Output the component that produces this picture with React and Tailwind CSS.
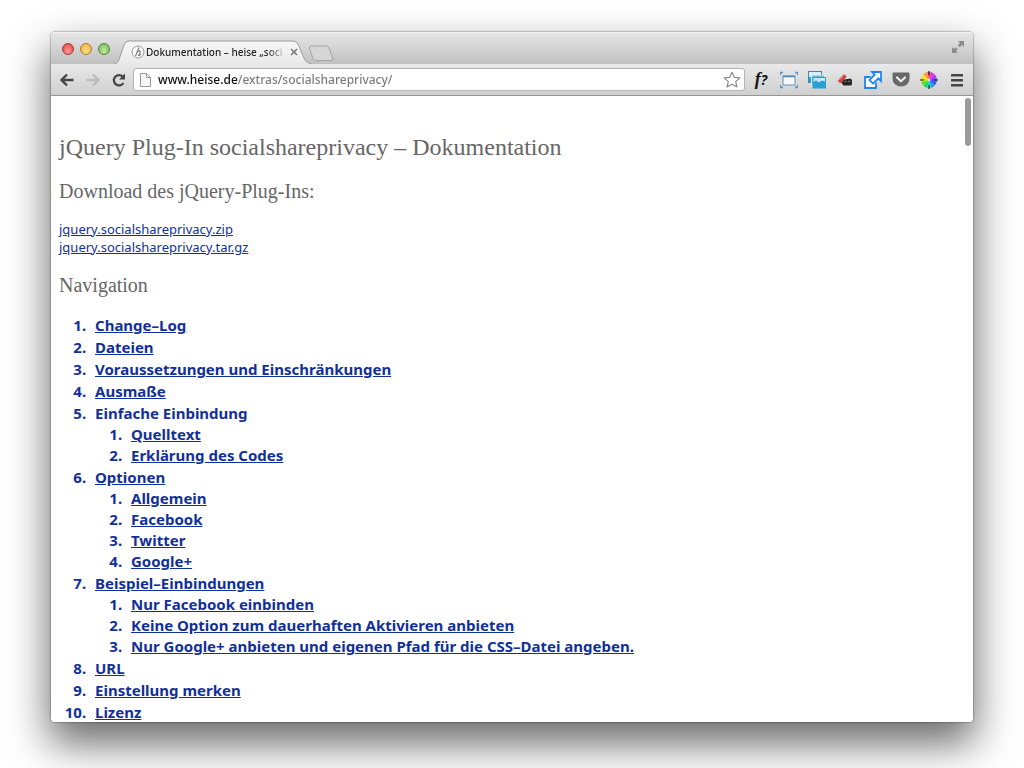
import React, { useState } from 'react';

const downloads = ['jquery.socialshareprivacy.zip', 'jquery.socialshareprivacy.tar.gz'];

const navigation = [
  { title: 'Change–Log', href: '#changelog' },
  { title: 'Dateien', href: '#dateien' },
  { title: 'Voraussetzungen und Einschränkungen', href: '#voraussetzungen' },
  { title: 'Ausmaße', href: '#ausmasse' },
  {
    title: 'Einfache Einbindung',
    children: [
      { title: 'Quelltext', href: '#quelltext' },
      { title: 'Erklärung des Codes', href: '#erklaerung' }
    ]
  },
  {
    title: 'Optionen',
    href: '#optionen',
    children: [
      { title: 'Allgemein', href: '#allgemein' },
      { title: 'Facebook', href: '#facebook' },
      { title: 'Twitter', href: '#twitter' },
      { title: 'Google+', href: '#google' }
    ]
  },
  {
    title: 'Beispiel–Einbindungen',
    href: '#beispiele',
    children: [
      { title: 'Nur Facebook einbinden', href: '#nur-facebook' },
      { title: 'Keine Option zum dauerhaften Aktivieren anbieten', href: '#keine-option' },
      { title: 'Nur Google+ anbieten und eigenen Pfad für die CSS–Datei angeben.', href: '#nur-google' }
    ]
  },
  { title: 'URL', href: '#url' },
  { title: 'Einstellung merken', href: '#einstellung' },
  { title: 'Lizenz', href: '#lizenz' }
];

const FontIcon = () => (
  <span className="font-['Liberation_Serif',serif] text-lg leading-[18px] font-bold italic text-[#151515]">
    f<span className="font-['Noto_Sans',sans-serif] text-sm">?</span>
  </span>
);

const ResizeIcon = () => (
  <svg viewBox="0 0 18 18" className="size-[18px]" fill="none">
    <rect x="3" y="5" width="12" height="9" fill="#f6f8fa" stroke="#5c93c0" />
    <path d="M3 5.5h12" stroke="#4b86b8" strokeWidth="1.6" />
    <path d="M0.5 4V1.5H3M15 1.5h2.5V4M0.5 14v2.5H3M15 16.5h2.5V14" stroke="#5c93c0" strokeWidth="1.3" />
  </svg>
);

const PicturesIcon = () => (
  <svg viewBox="0 0 18 18" className="size-[18px]">
    <rect x="0.5" y="0.5" width="13" height="11" fill="#d9eef8" stroke="#2c8dba" />
    <rect x="1" y="6" width="12" height="5" fill="#3aa0cc" />
    <rect x="3.5" y="4" width="13" height="10" fill="#6cc0e4" stroke="#e9f6fc" strokeWidth="0.8" />
    <rect x="4.5" y="6" width="13.5" height="11.5" fill="#2b9fd4" />
    <path d="M5.5 7h11.500v3.500l-3-1-3 2-3-2-2.500 1.500z" fill="#bfe6f6" />
    <circle cx="14.500" cy="8.500" r="0.900" fill="#fff" />
  </svg>
);

const EraserIcon = () => (
  <svg viewBox="0 0 18 18" className="size-[18px]">
    <path d="M2 9.5 7.5 3.5Q9 3 10.5 5.5L5.5 12Q2.500 12 2 9.500Z" fill="#c8403a" />
    <path d="M3 9 8 4.200" stroke="#e4776d" strokeWidth="1.2" />
    <path d="M5.5 12 8 8.5 14.5 7.5 16 9v4.500l-1 1H7.500Z" fill="#262626" />
    <path d="M8.5 10.5h2M12 10.200h2.500" stroke="#777" />
  </svg>
);

const ShareIcon = () => (
  <svg viewBox="0 0 18 18" className="size-[18px]" fill="#fff" stroke="#1e86f0" strokeWidth="1.8">
    <path d="M6.5 6H1v11h11v-5.500" />
    <path d="M8 1h9v9l-2.700-2.700-5.300 5.300L5.400 9l5.300-5.300z" />
  </svg>
);

const PocketIcon = () => (
  <svg viewBox="0 0 18 18" className="size-[18px]">
    <path d="M1.500 1.500h15q1 0 1 1v5a8.500 8 0 0 1-17 0v-5q0-1 1-1z" fill="#686868" />
    <path d="m5 6.500 4 3.800 4-3.800" fill="none" stroke="#eee" strokeWidth="2.2" strokeLinecap="round" strokeLinejoin="round" />
  </svg>
);

// clockwise from the top
const wheelColors = ['#f5455e', '#f02ad8', '#a63cf0', '#5548f2', '#2b55f5', '#169cf0', '#18d8c4', '#1ad95a', '#4fe51c', '#b5ec1b', '#ffe11a', '#ff9a30'];

const ColorWheelIcon = () => (
  <svg viewBox="0 0 18 18" className="size-[18px]">
    {wheelColors.map((color, idx) => (
      <path key={color} d="M9 9 7 1.300A8 8 0 0 1 11 1.300Z" fill={color} transform={`rotate(${idx * 30} 9 9)`} />
    ))}
    <path d="M9 0v4M9 14v4M0 9h4M14 9h4" stroke="#222" strokeWidth="1.2" />
    <circle cx="9" cy="9" r="1" fill="#fff" />
  </svg>
);

const MenuIcon = () => (
  <svg viewBox="0 0 18 18" className="size-[18px]" fill="#454545">
    <rect x="3" y="3" width="12" height="2.5" rx="0.5" />
    <rect x="3" y="8" width="12" height="2.5" rx="0.5" />
    <rect x="3" y="13" width="12" height="2.5" rx="0.5" />
  </svg>
);

const extensions = [
  { label: 'Schriftart', Icon: FontIcon },
  { label: 'Fenstergröße', Icon: ResizeIcon },
  { label: 'Bilder', Icon: PicturesIcon },
  { label: 'Cache leeren', Icon: EraserIcon },
  { label: 'Teilen', Icon: ShareIcon },
  { label: 'Pocket', Icon: PocketIcon },
  { label: 'Farben', Icon: ColorWheelIcon },
  { label: 'Menü', Icon: MenuIcon }
];

const TitleBar = () => (
  <div className="flex h-8 items-end border-t border-[#f4f4f4] bg-linear-to-b from-[#e6e6e6] to-[#c0c0c0] pl-[11px]">
    <div className="flex gap-[6px] pb-[9px]">
      <button aria-label="Schließen" className="size-3 rounded-full border border-[#a63a38] bg-radial-[at_50%_75%] from-[#ff9a94] to-[#dc3f3d]" />
      <button aria-label="Minimieren" className="size-3 rounded-full border border-[#b27a2a] bg-radial-[at_50%_75%] from-[#ffe28c] to-[#eba536]" />
      <button aria-label="Vergrößern" className="size-3 rounded-full border border-[#518440] bg-radial-[at_50%_75%] from-[#c5ec9c] to-[#70b354]" />
    </div>
    <div className="relative ml-1 flex h-6 w-[198px] items-center pr-2 pl-[17px]">
      <svg viewBox="0 0 198 24" className="absolute inset-0 h-6 w-[198px]">
        <defs>
          <linearGradient id="tab" x1="0" y1="0" x2="0" y2="1">
            <stop offset="0" stopColor="#f7f7f7" />
            <stop offset="1" stopColor="#e9e9e9" />
          </linearGradient>
        </defs>
        <path
          d="M0 24C4 23 4.500 21 5.500 18L10 5Q11.500 1 15 1H179Q183 1 184.500 5L190 18C191.500 21.500 193 23 198 24"
          fill="url(#tab)"
          stroke="#9b9b9b"
        />
      </svg>
      <svg viewBox="0 0 14 14" className="relative size-[14px] shrink-0" fill="none" stroke="#999">
        <circle cx="7" cy="7" r="6" fill="#fafafa" />
        <path d="M8 2.500 4.500 11M5.500 8Q8 5 9 6T7.500 10.500Q8.500 11 10 9" stroke="#777" strokeWidth="1.1" />
      </svg>
      <span className="relative ml-px flex-1 mask-r-from-85% font-['Noto_Sans',sans-serif] text-[10px] leading-4 font-medium whitespace-nowrap text-[#222]">
        Dokumentation – heise „soci
      </span>
      <button aria-label="Tab schließen" className="relative mr-1 ml-px flex size-3 items-center justify-center">
        <svg viewBox="0 0 12 12" className="size-3" stroke="#777" strokeWidth="1.5">
          <path d="m3 3 6 6M9 3 3 9" />
        </svg>
      </button>
    </div>
    <button aria-label="Neuer Tab" className="-ml-1 mb-[2px]">
      <svg viewBox="0 0 26 17" className="h-[17px] w-[26px]">
        <path d="M3 1H18Q20 1 21 3L24.500 13Q25 15.500 23 15.500H8Q6 15.500 5 13.500L1.500 3.500Q1 1 3 1Z" fill="#d6d6d6" stroke="#a5a5a5" />
      </svg>
    </button>
    <button aria-label="Vollbild" className="mr-2 mb-[10px] ml-auto">
      <svg viewBox="0 0 14 14" className="size-[14px]" fill="#8c8c8c">
        <path d="M7 1h6v6l-2-2-2.200 2.200-2-2L9 3zM1 7l2 2 1.800-1.800 2 2L5 11l2 2H1z" />
      </svg>
    </button>
  </div>
);

const Toolbar = () => {
  const [url, setUrl] = useState('www.heise.de/extras/socialshareprivacy/');

  return (
    <div className="flex h-8 items-center border-b border-[#959595] bg-linear-to-b from-[#e9e9e9] to-[#cfcfcf] pr-[7px] pl-[3px]">
      <button aria-label="Zurück" className="flex w-[26px] justify-center">
        <svg viewBox="0 0 16 16" className="size-4" fill="none" stroke="#454545" strokeWidth="2.4">
          <path d="M14.500 8H3M8 2.500 2.500 8 8 13.500" />
        </svg>
      </button>
      <button aria-label="Vorwärts" className="flex w-[26px] justify-center">
        <svg viewBox="0 0 16 16" className="size-4" fill="none" stroke="#bdbdbd" strokeWidth="2.4">
          <path d="M1.500 8H13M8 2.500 13.500 8 8 13.500" />
        </svg>
      </button>
      <button aria-label="Neu laden" className="flex w-[26px] justify-center">
        <svg viewBox="0 0 16 16" className="size-4">
          <path d="M12.500 11A5.200 5.200 0 1 1 11.500 4.300" fill="none" stroke="#454545" strokeWidth="2.2" />
          <path d="M14 1.500V7.500H8Z" fill="#454545" />
        </svg>
      </button>
      <div className="mr-[7px] ml-px flex h-[23px] flex-1 items-center rounded-[3px] border border-[#b4b4b4] bg-white pr-[3px] pl-1">
        <svg viewBox="0 0 14 16" className="h-4 w-[14px]" fill="#f7f7f7" stroke="#999">
          <path d="M2.500 1.500H8.500L12.500 5.500V14.500H2.500ZM8.500 1.500V5.500H12.500" />
        </svg>
        <input
          type="text"
          aria-label="Adresse"
          value={url}
          onChange={(e) => setUrl(e.target.value)}
          className="ml-[6px] min-w-0 flex-1 bg-linear-to-r from-[#111] from-[80px] to-[#777] to-[80px] bg-clip-text font-['Noto_Sans',sans-serif] text-xs leading-5 font-medium text-transparent outline-none"
        />
        <button aria-label="Lesezeichen">
          <svg viewBox="0 0 18 18" className="size-[18px]" fill="#fff" stroke="#8c8c8c" strokeWidth="1.2" strokeLinejoin="round">
            <path d="m9 1.300 2.300 5 5.500.600-4.100 3.700 1.200 5.400L9 13.200 4.100 16l1.200-5.400L1.200 6.900l5.500-.600z" />
          </svg>
        </button>
      </div>
      <div className="flex items-center gap-[10px]">
        {extensions.map(({ label, Icon }) => (
          <button key={label} aria-label={label} className="flex size-[18px] items-center justify-center">
            <Icon />
          </button>
        ))}
      </div>
    </div>
  );
};

const NavList = ({ items, nested }) => (
  <ol className={`list-decimal pl-[31px] ${nested ? 'leading-[21px]' : 'leading-[22px]'}`}>
    {items.map((item) => (
      <li key={item.title} className="pl-[5px]">
        {item.href ? (
          <a href={item.href} className="underline">
            {item.title}
          </a>
        ) : (
          item.title
        )}
        {item.children && <NavList items={item.children} nested />}
      </li>
    ))}
  </ol>
);

const App = () => (
  <div className="flex h-screen flex-col overflow-hidden bg-white px-[51px] pt-8 pb-[46px]">
    <div className="flex min-h-0 flex-1 flex-col overflow-hidden rounded-[4px] shadow-[0_0_1px_1px_rgba(0,0,0,0.2),0_20px_40px_2px_rgba(0,0,0,0.58)]">
      <TitleBar />
      <Toolbar />
      <main className="relative min-h-0 flex-1 overflow-hidden bg-white px-2 pt-9 font-['Noto_Sans',sans-serif] text-[13px] text-[#12309a]">
        <h1 className="font-['Liberation_Serif',serif] text-2xl leading-[30px] text-[#666]">
          jQuery Plug-In socialshareprivacy – Dokumentation
        </h1>
        <h2 className="mt-4 font-['Liberation_Serif',serif] text-xl leading-[26px] text-[#666]">
          Download des jQuery-Plug-Ins:
        </h2>
        <p className="mt-4 flex flex-col items-start leading-[18px]">
          {downloads.map((file) => (
            <a key={file} href={`#${file}`} className="underline">
              {file}
            </a>
          ))}
        </p>
        <h2 className="mt-4 font-['Liberation_Serif',serif] text-xl leading-[26px] text-[#666]">
          Navigation
        </h2>
        <nav className="mt-4 text-[15px] font-bold">
          <NavList items={navigation} />
        </nav>
        <div className="absolute top-[2px] right-[2px] h-12 w-[6px] rounded-full bg-[#9b9b9b]" />
      </main>
    </div>
  </div>
);

export default App;
